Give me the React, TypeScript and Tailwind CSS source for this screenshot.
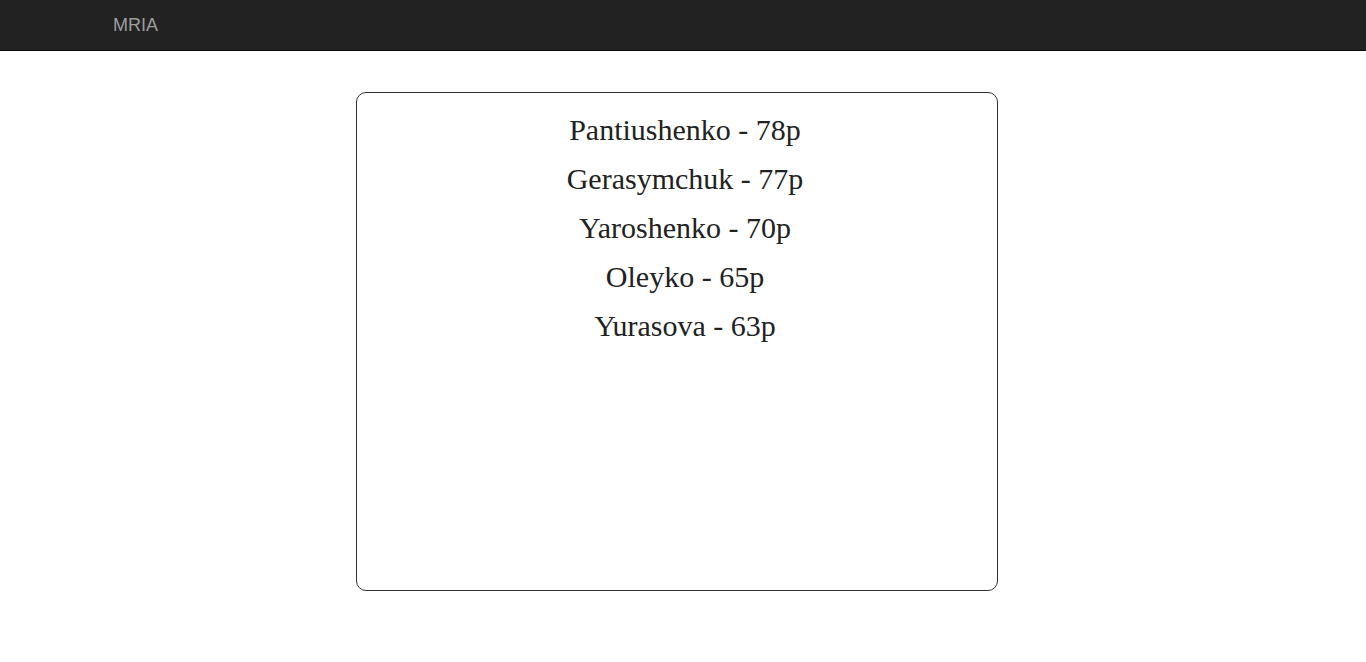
export default function App() {
  const rows = [
    "Pantiushenko - 78p",
    "Gerasymchuk - 77p",
    "Yaroshenko - 70p",
    "Oleyko - 65p",
    "Yurasova - 63p",
  ];
  return (
    <div className="min-h-screen bg-white">
      <nav className="h-[51px] bg-[#222222] border-b border-[#080808] flex items-center">
        <span
          className="ml-[113px] text-[18px] text-[#9d9d9d] leading-none"
          style={{ fontFamily: '"Liberation Sans", Arial, sans-serif' }}
        >
          MRIA
        </span>
      </nav>
      <div className="flex justify-center pt-[41px]">
        <div className="w-[642px] h-[499px] border border-[#333] rounded-[10px] mr-[12px] pt-[12px] pl-[16px] flex flex-col items-center">
          {rows.map((r) => (
            <div
              key={r}
              className="text-[30px] leading-[49px] text-[#222]"
              style={{ fontFamily: '"Liberation Serif", "Times New Roman", serif' }}
            >
              {r}
            </div>
          ))}
        </div>
      </div>
    </div>
  );
}
